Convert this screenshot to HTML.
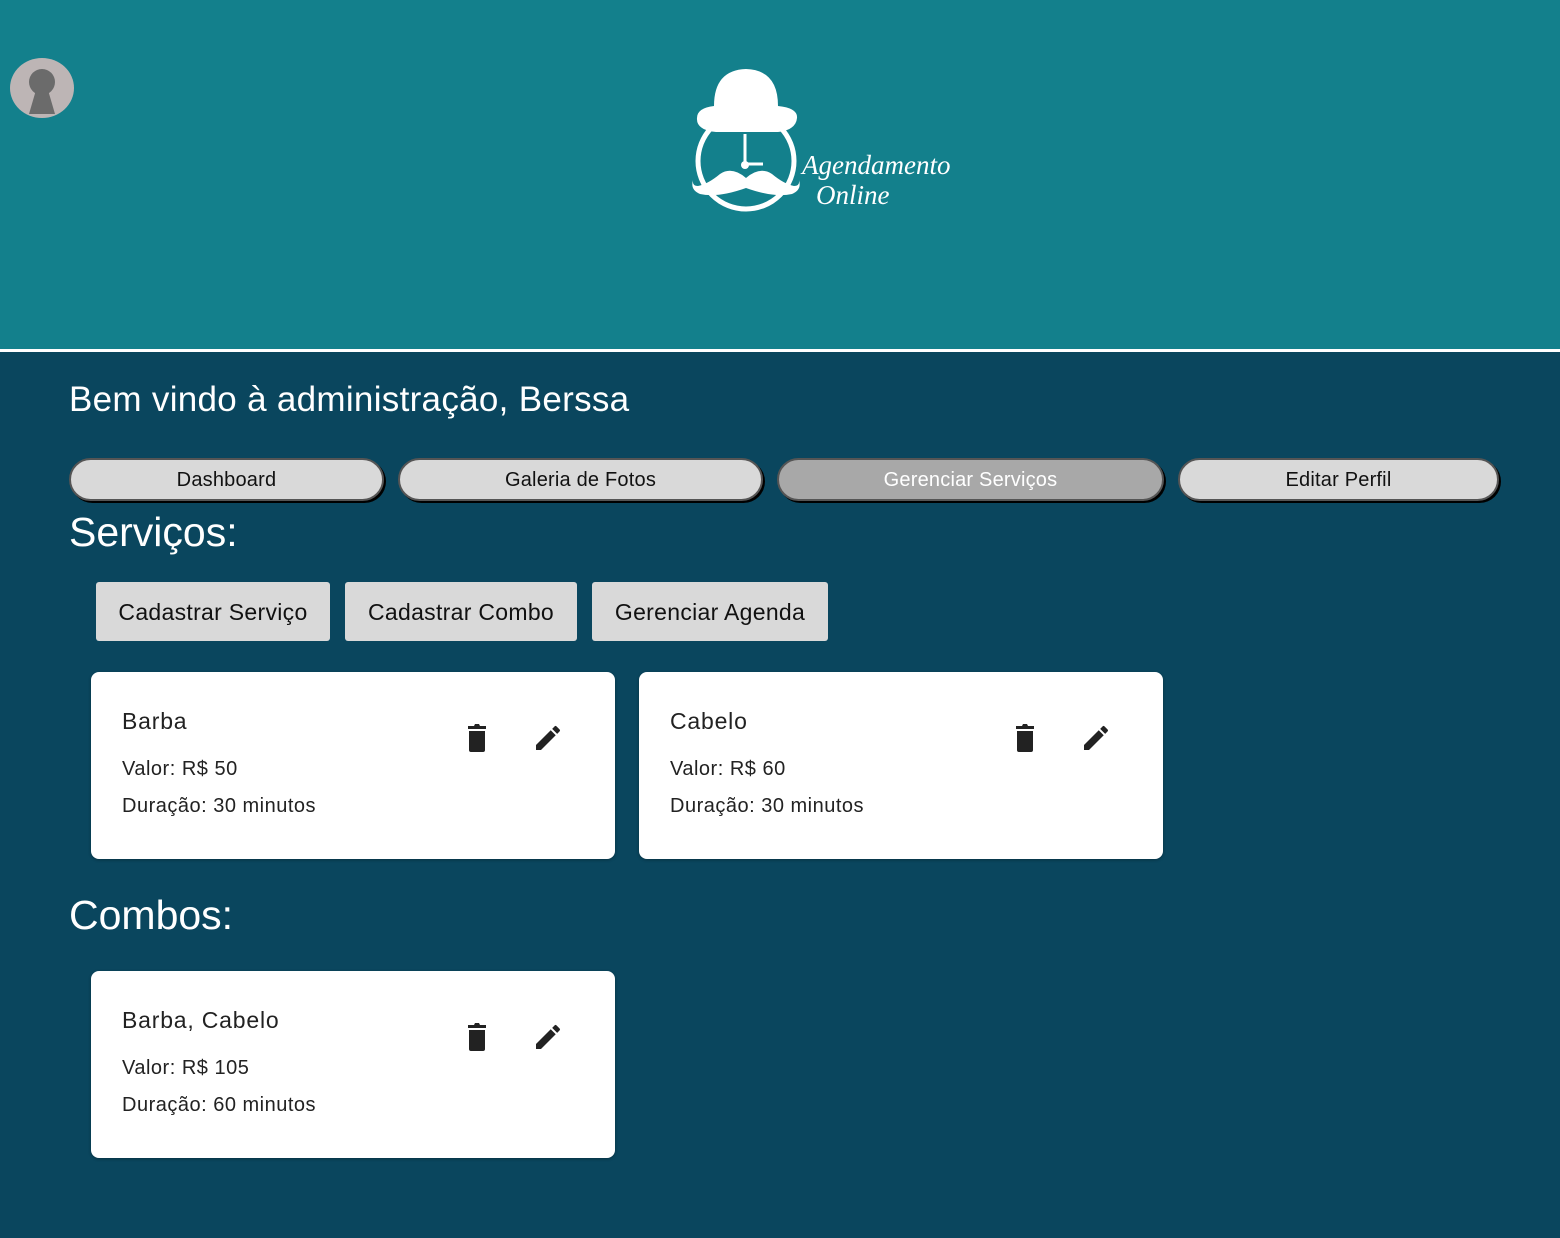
<!DOCTYPE html>
<html><head><meta charset="utf-8"><style>
*{box-sizing:border-box;margin:0;padding:0}
body{width:1560px;height:1238px;background:#0a465e;font-family:"Liberation Sans",Arial,sans-serif;position:relative;overflow:hidden}
.hdr{position:absolute;left:0;top:0;width:1560px;height:352px;background:#13808c;border-bottom:3px solid #fff}
.av{position:absolute;left:10px;top:58px;width:64px;height:60px;border-radius:50%;background:#bdb5b5;overflow:hidden}
.abs{position:absolute}
.nav{position:absolute;top:458px;height:43px;border-radius:22px;background:#d9d9d9;border:2px solid #555;box-shadow:2px 2px 0 #000;font-size:20px;text-align:center;line-height:41px;color:#111;letter-spacing:.2px}
.btn{position:absolute;top:582px;height:59px;background:#d9d9d9;border-radius:3px;font-size:23px;line-height:60px;text-align:center;color:#111;letter-spacing:.3px}
.card{position:absolute;width:524px;height:187px;background:#fff;border-radius:8px;box-shadow:0 1px 3px rgba(0,0,0,.3)}
.card .t{position:absolute;left:31px;top:36px;font-size:23px;color:#222;letter-spacing:.8px}
.card .v{position:absolute;left:31px;top:86px;font-size:20px;color:#222;letter-spacing:.5px}
.card .d{position:absolute;left:31px;top:123px;font-size:20px;color:#222;letter-spacing:.5px}
.card svg{position:absolute;top:50px}
h2{position:absolute;left:69px;color:#fff;font-weight:normal;font-size:41px}
</style></head><body>
<div class="hdr">
<div class="av"><svg width="64" height="60"><circle cx="32" cy="24" r="13" fill="#6b6b6b"/><path d="M26 32 L38 32 L45 56 L19 56 Z" fill="#6b6b6b"/></svg></div>
<svg class="abs" style="left:688px;top:66px" width="120" height="150" viewBox="0 0 120 150">
<path d="M26 40 Q26 4 58 3 Q90 4 90 40 Q110 42 109 52 Q108 64 90 66 L28 66 Q8 64 9 52 Q9 42 26 40Z" fill="#fff"/>
<circle cx="58" cy="95" r="48" fill="none" stroke="#fff" stroke-width="5"/>
<path d="M57 68 V98 H75" stroke="#fff" stroke-width="3" fill="none"/>
<circle cx="57" cy="99" r="4" fill="#fff"/>
<path d="M58 112 Q44 100 32 108 Q20 118 10 120 Q4 120 5 114 Q2 124 12 128 Q30 132 58 122 Q86 132 104 128 Q114 124 111 114 Q112 120 106 120 Q96 118 84 108 Q72 100 58 112Z" fill="#fff"/>
</svg>
<div class="abs" style="left:802px;top:150px;color:#fff;font-family:'Liberation Serif',serif;font-style:italic;font-size:27px;line-height:30px">Agendamento<br><span style="margin-left:14px">Online</span></div>
</div>
<div class="abs" style="left:69px;top:380px;color:#fff;font-size:35px;letter-spacing:.3px">Bem vindo à administração, Berssa</div>
<div class="nav" style="left:69px;width:315px">Dashboard</div>
<div class="nav" style="left:398px;width:365px">Galeria de Fotos</div>
<div class="nav" style="left:777px;width:387px;background:#a8a8a8;color:#fff">Gerenciar Serviços</div>
<div class="nav" style="left:1178px;width:321px">Editar Perfil</div>
<h2 style="top:509px">Serviços:</h2>
<div class="btn" style="left:96px;width:234px">Cadastrar Serviço</div>
<div class="btn" style="left:345px;width:232px">Cadastrar Combo</div>
<div class="btn" style="left:592px;width:236px">Gerenciar Agenda</div>

<div class="card" style="left:91px;top:672px"><div class="t">Barba</div><div class="v">Valor: R$ 50</div><div class="d">Duração: 30 minutos</div>
<svg style="left:374px" width="24" height="32" viewBox="0 0 24 32"><path d="M3 4h6l1-2h4l1 2h6v3H3z M4 9h16v19q0 2-2 2H6q-2 0-2-2z" fill="#222"/></svg>
<svg style="left:441px" width="32" height="32" viewBox="0 0 24 24"><path d="M3 17.25V21h3.75L17.81 9.94l-3.75-3.75L3 17.25zM20.71 7.04a1 1 0 000-1.41l-2.34-2.34a1 1 0 00-1.41 0l-1.83 1.83 3.75 3.75 1.83-1.83z" fill="#222"/></svg></div>

<div class="card" style="left:639px;top:672px"><div class="t">Cabelo</div><div class="v">Valor: R$ 60</div><div class="d">Duração: 30 minutos</div>
<svg style="left:374px" width="24" height="32" viewBox="0 0 24 32"><path d="M3 4h6l1-2h4l1 2h6v3H3z M4 9h16v19q0 2-2 2H6q-2 0-2-2z" fill="#222"/></svg>
<svg style="left:441px" width="32" height="32" viewBox="0 0 24 24"><path d="M3 17.25V21h3.75L17.81 9.94l-3.75-3.75L3 17.25zM20.71 7.04a1 1 0 000-1.41l-2.34-2.34a1 1 0 00-1.41 0l-1.83 1.83 3.75 3.75 1.83-1.83z" fill="#222"/></svg></div>

<h2 style="top:892px">Combos:</h2>
<div class="card" style="left:91px;top:971px"><div class="t">Barba, Cabelo</div><div class="v">Valor: R$ 105</div><div class="d">Duração: 60 minutos</div>
<svg style="left:374px" width="24" height="32" viewBox="0 0 24 32"><path d="M3 4h6l1-2h4l1 2h6v3H3z M4 9h16v19q0 2-2 2H6q-2 0-2-2z" fill="#222"/></svg>
<svg style="left:441px" width="32" height="32" viewBox="0 0 24 24"><path d="M3 17.25V21h3.75L17.81 9.94l-3.75-3.75L3 17.25zM20.71 7.04a1 1 0 000-1.41l-2.34-2.34a1 1 0 00-1.41 0l-1.83 1.83 3.75 3.75 1.83-1.83z" fill="#222"/></svg></div>
</body></html>
